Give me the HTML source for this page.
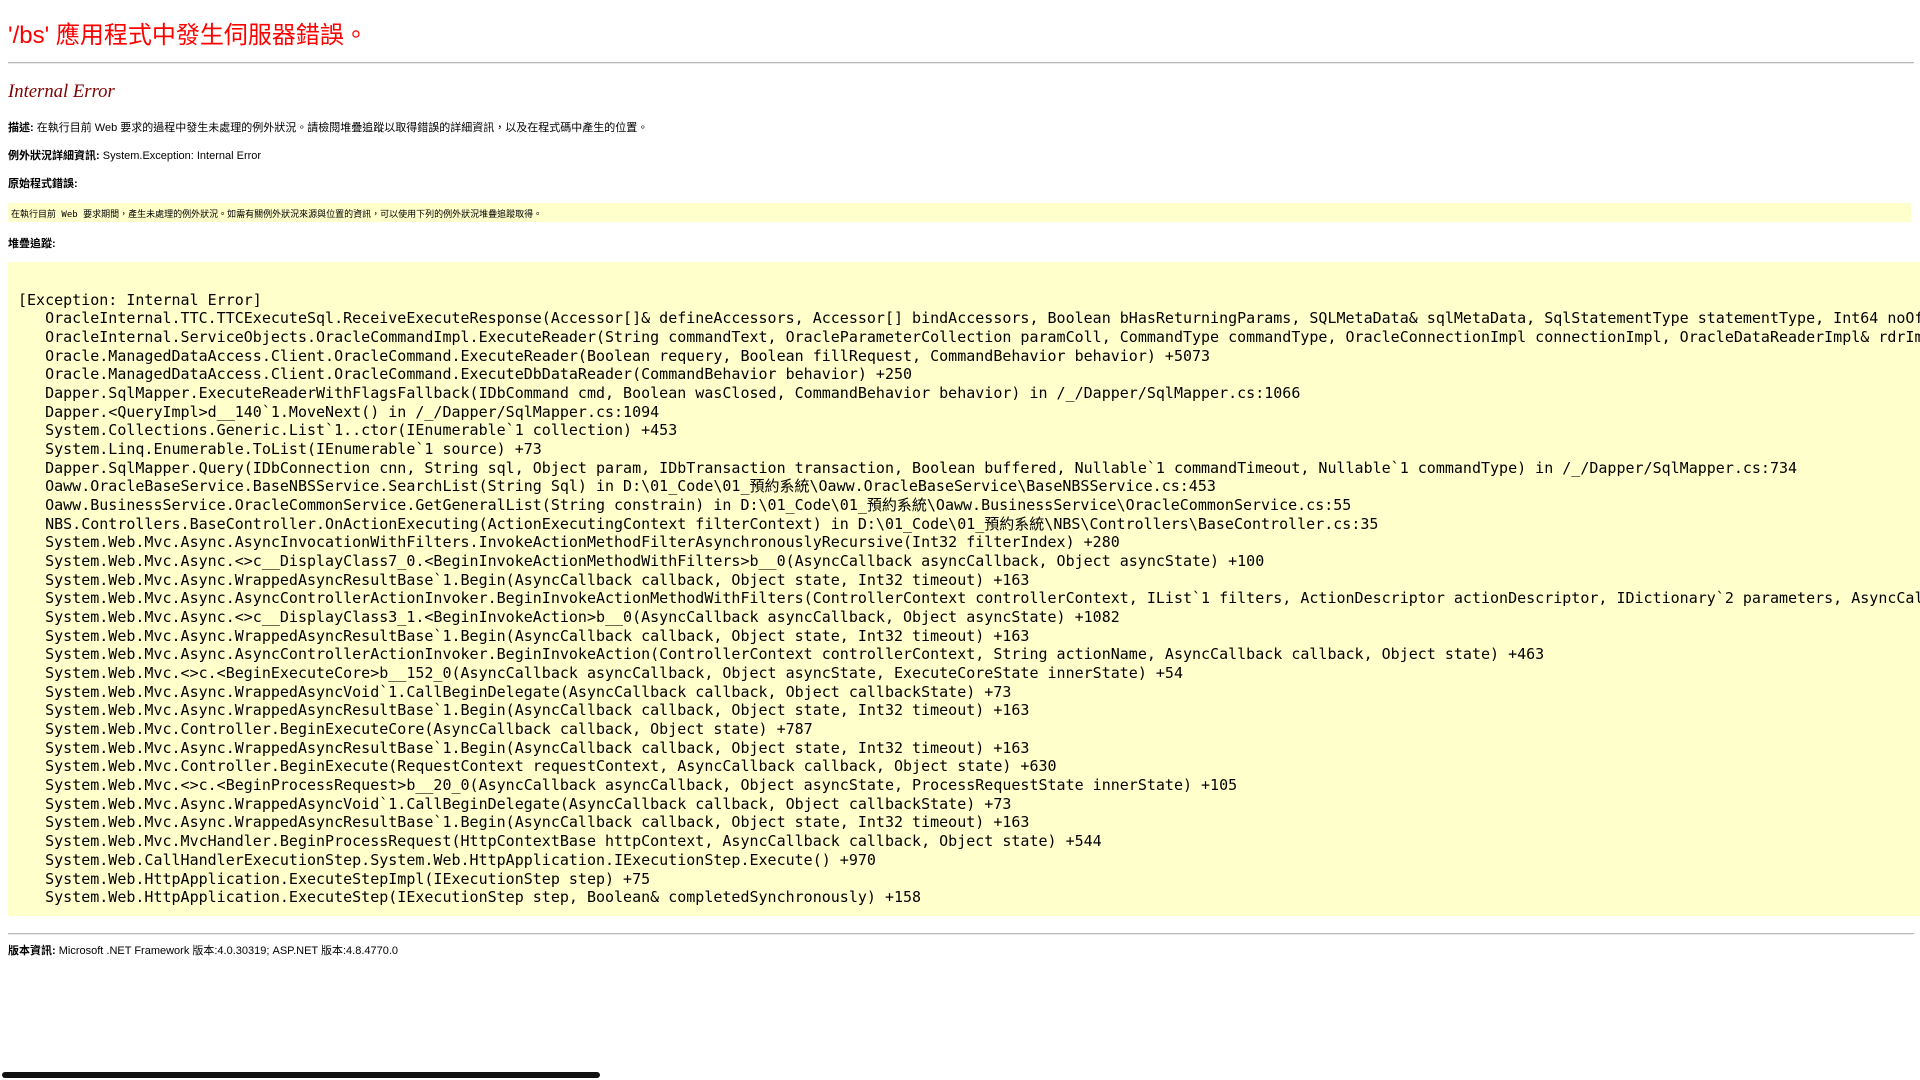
<!DOCTYPE html>
<html><head><meta charset="utf-8"><style>
html,body{margin:0;padding:0;overflow:hidden;width:1920px;height:1080px;background:#fff}
body{font-family:"Liberation Sans","Noto Sans CJK TC",sans-serif;font-size:11px;color:#000;position:relative}
.a{position:absolute;left:8px;white-space:nowrap}
h1{font-weight:normal;font-size:24px;color:red;margin:0;font-family:"Liberation Sans","Noto Sans CJK TC",sans-serif}
h2{font-weight:normal;font-style:italic;font-family:"Liberation Serif","Noto Serif CJK SC",serif;font-size:18.7px;color:maroon;margin:0}
.hr{position:absolute;left:8px;width:1906px;height:0;border-top:1px solid #bbb;border-bottom:1px solid #e8e8e8}
.y{position:absolute;left:8px;background:#ffffcc}
pre{margin:0;font-family:"DejaVu Sans Mono","Noto Sans CJK TC",monospace;font-size:15px;line-height:18.67px;white-space:pre}
.sb{position:absolute;top:1072px;left:2px;width:598px;height:6px;border-radius:3px;background:#111}
</style></head><body>
<h1 class="a" style="top:15px">'/bs' 應用程式中發生伺服器錯誤。</h1>
<div class="hr" style="top:62px"></div>
<h2 class="a" style="top:81px">Internal Error</h2>
<div class="a" style="top:119px"><b>描述:</b> 在執行目前 Web 要求的過程中發生未處理的例外狀況。請檢閱堆疊追蹤以取得錯誤的詳細資訊，以及在程式碼中產生的位置。</div>
<div class="a" style="top:147px"><b>例外狀況詳細資訊:</b> System.Exception: Internal Error</div>
<div class="a" style="top:175px"><b>原始程式錯誤:</b></div>
<div class="y" style="top:203px;width:1903px;height:19px"><div style="position:absolute;left:3px;top:4px;font-family:'DejaVu Sans Mono','Noto Sans CJK TC',monospace;font-size:9px;white-space:nowrap">在執行目前 Web 要求期間，產生未處理的例外狀況。如需有關例外狀況來源與位置的資訊，可以使用下列的例外狀況堆疊追蹤取得。</div></div>
<div class="a" style="top:235px"><b>堆疊追蹤:</b></div>
<div class="y" style="top:262px;width:1920px;height:654px"><pre style="position:absolute;left:10px;top:10px">

[Exception: Internal Error]
   OracleInternal.TTC.TTCExecuteSql.ReceiveExecuteResponse(Accessor[]&amp; defineAccessors, Accessor[] bindAccessors, Boolean bHasReturningParams, SQLMetaData&amp; sqlMetaData, SqlStatementType statementType, Int64 noOfRowsFetchedLastTime) +1234
   OracleInternal.ServiceObjects.OracleCommandImpl.ExecuteReader(String commandText, OracleParameterCollection paramColl, CommandType commandType, OracleConnectionImpl connectionImpl, OracleDataReaderImpl&amp; rdrImpl) +1234
   Oracle.ManagedDataAccess.Client.OracleCommand.ExecuteReader(Boolean requery, Boolean fillRequest, CommandBehavior behavior) +5073
   Oracle.ManagedDataAccess.Client.OracleCommand.ExecuteDbDataReader(CommandBehavior behavior) +250
   Dapper.SqlMapper.ExecuteReaderWithFlagsFallback(IDbCommand cmd, Boolean wasClosed, CommandBehavior behavior) in /_/Dapper/SqlMapper.cs:1066
   Dapper.&lt;QueryImpl&gt;d__140`1.MoveNext() in /_/Dapper/SqlMapper.cs:1094
   System.Collections.Generic.List`1..ctor(IEnumerable`1 collection) +453
   System.Linq.Enumerable.ToList(IEnumerable`1 source) +73
   Dapper.SqlMapper.Query(IDbConnection cnn, String sql, Object param, IDbTransaction transaction, Boolean buffered, Nullable`1 commandTimeout, Nullable`1 commandType) in /_/Dapper/SqlMapper.cs:734
   Oaww.OracleBaseService.BaseNBSService.SearchList(String Sql) in D:\01_Code\01_預約系統\Oaww.OracleBaseService\BaseNBSService.cs:453
   Oaww.BusinessService.OracleCommonService.GetGeneralList(String constrain) in D:\01_Code\01_預約系統\Oaww.BusinessService\OracleCommonService.cs:55
   NBS.Controllers.BaseController.OnActionExecuting(ActionExecutingContext filterContext) in D:\01_Code\01_預約系統\NBS\Controllers\BaseController.cs:35
   System.Web.Mvc.Async.AsyncInvocationWithFilters.InvokeActionMethodFilterAsynchronouslyRecursive(Int32 filterIndex) +280
   System.Web.Mvc.Async.&lt;&gt;c__DisplayClass7_0.&lt;BeginInvokeActionMethodWithFilters&gt;b__0(AsyncCallback asyncCallback, Object asyncState) +100
   System.Web.Mvc.Async.WrappedAsyncResultBase`1.Begin(AsyncCallback callback, Object state, Int32 timeout) +163
   System.Web.Mvc.Async.AsyncControllerActionInvoker.BeginInvokeActionMethodWithFilters(ControllerContext controllerContext, IList`1 filters, ActionDescriptor actionDescriptor, IDictionary`2 parameters, AsyncCallback callback, Object state) +117
   System.Web.Mvc.Async.&lt;&gt;c__DisplayClass3_1.&lt;BeginInvokeAction&gt;b__0(AsyncCallback asyncCallback, Object asyncState) +1082
   System.Web.Mvc.Async.WrappedAsyncResultBase`1.Begin(AsyncCallback callback, Object state, Int32 timeout) +163
   System.Web.Mvc.Async.AsyncControllerActionInvoker.BeginInvokeAction(ControllerContext controllerContext, String actionName, AsyncCallback callback, Object state) +463
   System.Web.Mvc.&lt;&gt;c.&lt;BeginExecuteCore&gt;b__152_0(AsyncCallback asyncCallback, Object asyncState, ExecuteCoreState innerState) +54
   System.Web.Mvc.Async.WrappedAsyncVoid`1.CallBeginDelegate(AsyncCallback callback, Object callbackState) +73
   System.Web.Mvc.Async.WrappedAsyncResultBase`1.Begin(AsyncCallback callback, Object state, Int32 timeout) +163
   System.Web.Mvc.Controller.BeginExecuteCore(AsyncCallback callback, Object state) +787
   System.Web.Mvc.Async.WrappedAsyncResultBase`1.Begin(AsyncCallback callback, Object state, Int32 timeout) +163
   System.Web.Mvc.Controller.BeginExecute(RequestContext requestContext, AsyncCallback callback, Object state) +630
   System.Web.Mvc.&lt;&gt;c.&lt;BeginProcessRequest&gt;b__20_0(AsyncCallback asyncCallback, Object asyncState, ProcessRequestState innerState) +105
   System.Web.Mvc.Async.WrappedAsyncVoid`1.CallBeginDelegate(AsyncCallback callback, Object callbackState) +73
   System.Web.Mvc.Async.WrappedAsyncResultBase`1.Begin(AsyncCallback callback, Object state, Int32 timeout) +163
   System.Web.Mvc.MvcHandler.BeginProcessRequest(HttpContextBase httpContext, AsyncCallback callback, Object state) +544
   System.Web.CallHandlerExecutionStep.System.Web.HttpApplication.IExecutionStep.Execute() +970
   System.Web.HttpApplication.ExecuteStepImpl(IExecutionStep step) +75
   System.Web.HttpApplication.ExecuteStep(IExecutionStep step, Boolean&amp; completedSynchronously) +158</pre></div>
<div class="hr" style="top:933px"></div>
<div class="a" style="top:942px"><b>版本資訊:</b> Microsoft .NET Framework 版本:4.0.30319; ASP.NET 版本:4.8.4770.0</div>
<div class="sb"></div>
</body></html>
